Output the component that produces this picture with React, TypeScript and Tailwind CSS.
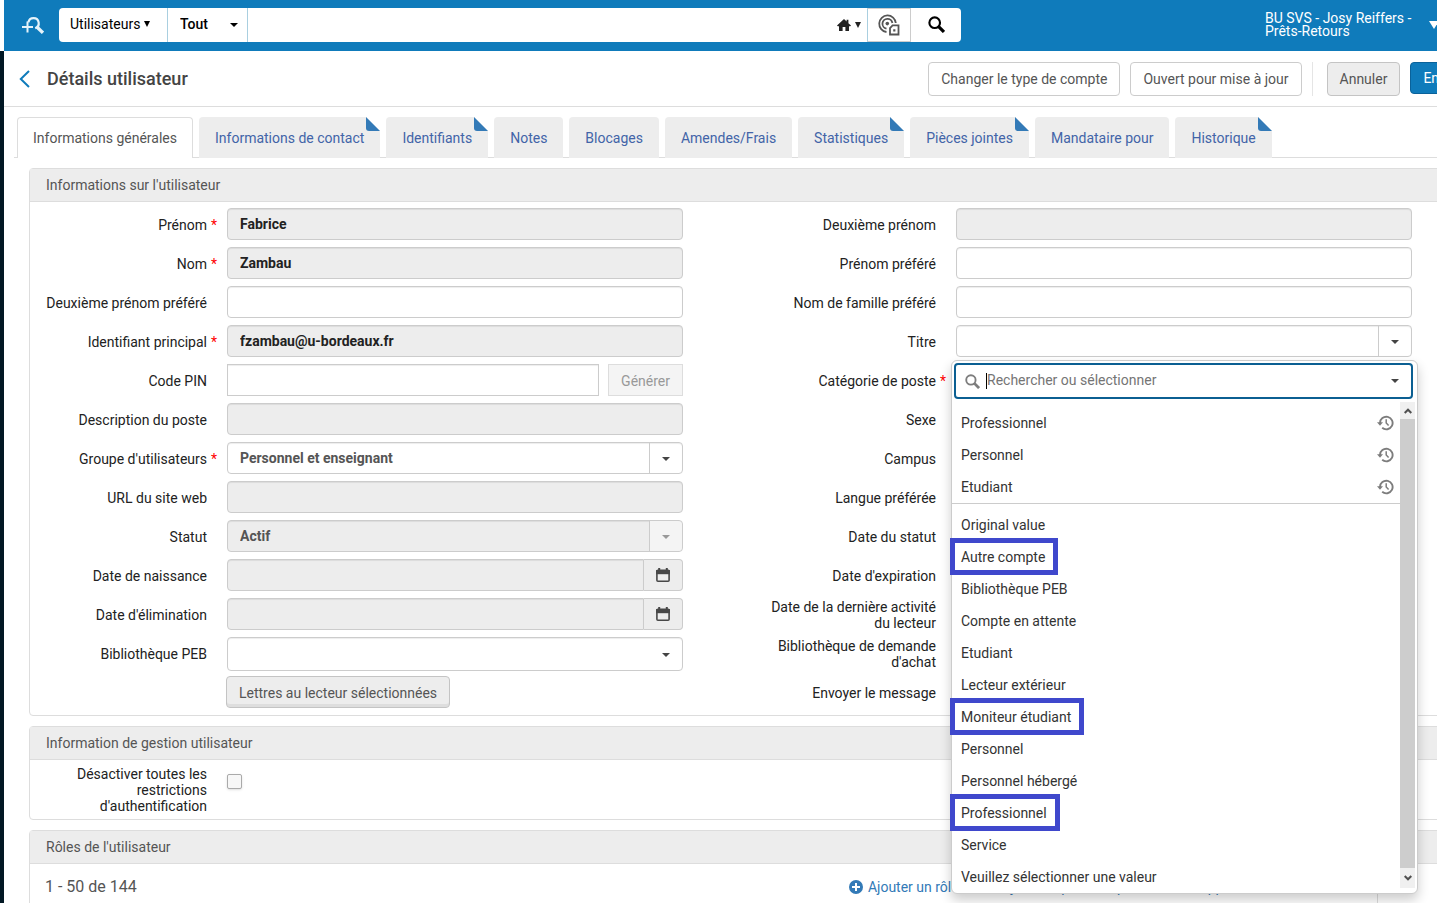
// App.tsx
// User details page: top search bar, tabs, form panels and the open
// "Catégorie de poste" dropdown.

import { useState, type ReactNode } from 'react';
import clsx from 'clsx';

type Field = {
  id: string;
  label: string;
  kind: 'text' | 'select' | 'combo' | 'date' | 'pin' | 'button' | 'category';
  value?: string;
  required?: boolean;
  disabled?: boolean;
};

const TABS = [
  { label: 'Informations générales' },
  { label: 'Informations de contact', flag: true },
  { label: 'Identifiants', flag: true },
  { label: 'Notes' },
  { label: 'Blocages' },
  { label: 'Amendes/Frais' },
  { label: 'Statistiques', flag: true },
  { label: 'Pièces jointes', flag: true },
  { label: 'Mandataire pour' },
  { label: 'Historique', flag: true },
];

const LEFT: Field[] = [
  { id: 'first', label: 'Prénom', kind: 'text', value: 'Fabrice', required: true, disabled: true },
  { id: 'last', label: 'Nom', kind: 'text', value: 'Zambau', required: true, disabled: true },
  { id: 'prefMiddle', label: 'Deuxième prénom préféré', kind: 'text' },
  { id: 'primary', label: 'Identifiant principal', kind: 'text', value: 'fzambau@u-bordeaux.fr', required: true, disabled: true },
  { id: 'pin', label: 'Code PIN', kind: 'pin' },
  { id: 'job', label: 'Description du poste', kind: 'text', disabled: true },
  { id: 'group', label: "Groupe d'utilisateurs", kind: 'select', value: 'Personnel et enseignant', required: true },
  { id: 'url', label: 'URL du site web', kind: 'text', disabled: true },
  { id: 'status', label: 'Statut', kind: 'select', value: 'Actif', disabled: true },
  { id: 'birth', label: 'Date de naissance', kind: 'date', disabled: true },
  { id: 'purge', label: "Date d'élimination", kind: 'date', disabled: true },
  { id: 'library', label: 'Bibliothèque PEB', kind: 'combo' },
  { id: 'letters', label: '', kind: 'button', value: 'Lettres au lecteur sélectionnées' },
];

const RIGHT: Field[] = [
  { id: 'middle', label: 'Deuxième prénom', kind: 'text', disabled: true },
  { id: 'prefFirst', label: 'Prénom préféré', kind: 'text' },
  { id: 'prefLast', label: 'Nom de famille préféré', kind: 'text' },
  { id: 'title', label: 'Titre', kind: 'select' },
  { id: 'category', label: 'Catégorie de poste', kind: 'category', required: true },
  { id: 'gender', label: 'Sexe', kind: 'select' },
  { id: 'campus', label: 'Campus', kind: 'select' },
  { id: 'lang', label: 'Langue préférée', kind: 'select' },
  { id: 'statusDate', label: 'Date du statut', kind: 'date', disabled: true },
  { id: 'expiry', label: "Date d'expiration", kind: 'date' },
  { id: 'activity', label: 'Date de la dernière activité du lecteur', kind: 'date', disabled: true },
  { id: 'acqLibrary', label: "Bibliothèque de demande d'achat", kind: 'combo' },
  { id: 'message', label: 'Envoyer le message', kind: 'text' },
];

const RECENT = ['Professionnel', 'Personnel', 'Etudiant'];

const OPTIONS = [
  { label: 'Original value' },
  { label: 'Autre compte', marked: true },
  { label: 'Bibliothèque PEB' },
  { label: 'Compte en attente' },
  { label: 'Etudiant' },
  { label: 'Lecteur extérieur' },
  { label: 'Moniteur étudiant', marked: true },
  { label: 'Personnel' },
  { label: 'Personnel hébergé' },
  { label: 'Professionnel', marked: true },
  { label: 'Service' },
  { label: 'Veuillez sélectionner une valeur' },
];

function Caret({ className }: { className?: string }) {
  return (
    <svg width="8" height="4" viewBox="0 0 8 4" className={className} aria-hidden="true">
      <path d="M0 0h8L4 4z" fill="currentColor" />
    </svg>
  );
}

function CalendarIcon() {
  return (
    <svg width="16" height="16" viewBox="0 0 16 16" className="text-[#484848]" aria-hidden="true">
      <rect x="1.9" y="3.2" width="12.2" height="11" rx="1" fill="none" stroke="currentColor" strokeWidth="1.6" />
      <path d="M1.1 3h13.8v4.2H1.1z" fill="currentColor" />
      <path d="M3.2 1h2v3h-2zM10.8 1h2v3h-2z" fill="currentColor" />
    </svg>
  );
}

function Magnifier({ size, className }: { size: number; className?: string }) {
  return (
    <svg width={size} height={size} viewBox="0 0 16 16" className={className} aria-hidden="true">
      <circle cx="6.3" cy="6.3" r="5" fill="none" stroke="currentColor" strokeWidth="2" />
      <path d="M10 10l5 5" stroke="currentColor" strokeWidth="3" />
    </svg>
  );
}

function HistoryIcon() {
  return (
    <svg width="17" height="16" viewBox="0 0 17 16" className="text-[#7d7d7d]" aria-hidden="true">
      <path d="M3 8a6.3 6.3 0 1 1 2.2 4.8" fill="none" stroke="currentColor" strokeWidth="1.9" />
      <path d="M0 7.3h6L3 10.8z" fill="currentColor" />
      <path d="M9.2 4.3V8l2.4 2.6" fill="none" stroke="currentColor" strokeWidth="1.5" />
    </svg>
  );
}

function TopBar() {
  return (
    <header className="flex h-[51px] items-center bg-[#0f7bbb] pb-0.5">
      <button type="button" aria-label="Recherche avancée" className="flex w-[55px] justify-center pl-0.5 text-[#e6f3fa]">
        <svg width="22" height="18" viewBox="0 0 22 18" fill="none" stroke="currentColor">
          <path d="M0 11h11M5.5 5.5v11" strokeWidth="2" />
          <path d="M6.4 6.4a5.2 5.2 0 1 1 6.8 5.8" strokeWidth="2.2" />
          <path d="M15.2 11.2l5.8 5.6" strokeWidth="3.4" />
        </svg>
      </button>
      <form className="flex h-[34px] w-[902px] overflow-hidden rounded-sm bg-white text-sm text-black">
        <button type="button" className="flex w-[109px] items-center gap-1 border-r border-[#a9cfe0] pb-0.5 pl-[11px]">
          Utilisateurs
          <svg width="6" height="6" viewBox="0 0 6 6"><path d="M0 0h6L3 6z" fill="currentColor" /></svg>
        </button>
        <div className="relative w-20 border-r border-[#a9cfe0]">
          <select aria-label="Champ de recherche" className="h-full w-full appearance-none pb-0.5 pl-3 font-medium">
            <option>Tout</option>
          </select>
          <Caret className="pointer-events-none absolute top-[15px] right-[9px]" />
        </div>
        <input aria-label="Rechercher" className="min-w-0 flex-1 px-3 outline-none" />
        <button type="button" aria-label="Portée" className="flex w-10 items-center justify-center gap-1 pl-1 text-[#222]">
          <svg width="14" height="12" viewBox="0 0 14 12" fill="currentColor">
            <path d="M7 0l2.6 2.4V.8h1.8v3.4L14 6.6l-.8.6H12V12H8.4V8H5.6v4H2V7.2H.8L0 6.6z" />
          </svg>
          <svg width="6" height="6" viewBox="0 0 6 6"><path d="M0 0h6L3 6z" fill="currentColor" /></svg>
        </button>
        <button type="button" aria-label="RFID" className="flex w-11 items-center justify-center border border-[#ccc] border-l-[#a9cfe0] text-[#555]">
          <svg width="22" height="22" viewBox="0 0 22 22" fill="none" stroke="currentColor" strokeWidth="1.8">
            <path d="M8.5 18A8.3 8.3 0 1 1 17.8 9" />
            <path d="M8.5 14.7A5 5 0 1 1 14.4 9" />
            <circle cx="9.3" cy="9.6" r="1.8" fill="currentColor" stroke="none" />
            <path d="M12 20.5V14l2.6-2.6h5.9v9.1z" />
            <path d="M15.2 15.2h2.2v2.2h-2.2z" fill="currentColor" stroke="none" />
          </svg>
        </button>
        <button type="submit" aria-label="Lancer la recherche" className="flex w-[50px] items-center justify-center text-black">
          <Magnifier size={17} />
        </button>
      </form>
      <div className="ml-auto flex items-center pr-[86px] text-sm leading-[13px] text-white">
        <span className="w-[164px]">BU SVS - Josy Reiffers - Prêts-Retours</span>
        <svg width="10" height="8" viewBox="0 0 10 8" aria-hidden="true"><path d="M0 0h10L5 8z" fill="currentColor" /></svg>
      </div>
    </header>
  );
}

function TitleBar() {
  return (
    <div className="flex h-14 items-center border-b border-[#ddd] pr-[21px] pl-[15px]">
      <a href="#retour" aria-label="Retour" className="text-[#0f7bbb]">
        <svg width="11" height="18" viewBox="0 0 11 18" fill="none" stroke="currentColor" strokeWidth="2">
          <path d="M10 1L1.8 9l8.2 8" />
        </svg>
      </a>
      <h1 className="ml-[17px] text-lg font-medium text-[#444]">Détails utilisateur</h1>
      <div className="ml-auto flex items-center text-sm text-[#555]">
        <button type="button" className="h-[34px] rounded-sm border border-[#ccc] px-3">Changer le type de compte</button>
        <button type="button" className="ml-2.5 h-[34px] rounded-sm border border-[#ccc] px-3">Ouvert pour mise à jour</button>
        <span className="ml-2.5 h-[34px] border-l border-[#e5e5e5]" />
        <button type="button" className="ml-3.5 h-[34px] rounded-sm border border-[#c4c4c4] bg-[#ededed] px-3">Annuler</button>
        <button type="button" className="mb-0.5 ml-2.5 h-8 rounded-sm border border-[#0a629a] bg-[#0f7bbb] px-3 text-white">Enregistrer</button>
      </div>
    </div>
  );
}

function Tabs() {
  const [active, setActive] = useState(0);
  return (
    <nav role="tablist" className="mt-2.5 ml-2.5 flex h-[41px] gap-1.5 border-b border-[#ddd] pl-[3px] text-sm">
      {TABS.map((tab, i) => (
        <button
          key={tab.label}
          type="button"
          role="tab"
          aria-selected={i === active}
          onClick={() => setActive(i)}
          className={clsx(
            'relative -mb-px rounded-t-sm',
            i === active
              ? 'border border-b-0 border-[#ddd] bg-white px-[15px] text-[#555]'
              : 'bg-[#ededed] px-4 text-[#4264a8]',
          )}
        >
          {tab.label}
          {tab.flag && (
            <svg width="14" height="14" viewBox="0 0 14 14" className="absolute top-0 right-0" aria-hidden="true">
              <path d="M0 0h14v14z" fill="#fff" />
              <path d="M0 0l14 14H3a3 3 0 0 1-3-3z" fill="#337ab7" />
            </svg>
          )}
        </button>
      ))}
    </nav>
  );
}

function Panel({ title, children }: { title: string; children: ReactNode }) {
  return (
    <section className="rounded-sm border border-[#ddd]">
      <h2 className="h-[33px] border-b border-[#ddd] bg-[#ededed] pl-4 text-sm leading-8 text-[#555]">{title}</h2>
      {children}
    </section>
  );
}

function CategoryDropdown({ id }: { id: string }) {
  return (
    <div className="absolute -top-1 -right-1.5 -left-[5px] z-10 rounded-md border border-[#ccc] bg-white p-0.5 pb-0 shadow-[0_6px_12px_rgba(0,0,0,0.2)]">
      <div className="mr-0.5 flex h-9 items-center rounded-sm border-2 border-[#0b5f92] pr-3 pl-[9px]">
        <Magnifier size={15} className="text-[#7d7d7d]" />
        <span className="ml-1.5 h-4 w-px bg-black" />
        <input id={id} placeholder="Rechercher ou sélectionner" className="min-w-0 flex-1 pb-0.5 text-sm outline-none placeholder:text-[#757575]" />
        <Caret className="text-[#444]" />
      </div>
      <div className="mt-[3px] -ml-0.5 flex text-sm text-[#333]">
        <div className="min-w-0 flex-1 pt-[5px]">
          <ul className="border-b border-[#ccc]">
            {RECENT.map(name => (
              <li key={name} className="flex h-8 items-center justify-between pr-1.5 pl-[9px]">
                {name}
                <HistoryIcon />
              </li>
            ))}
          </ul>
          <ul className="pt-[5px]">
            {OPTIONS.map(opt => (
              <li key={opt.label} className="flex h-8 pl-[9px] leading-8">
                <span className="relative">
                  {opt.label}
                  {opt.marked && <span className="absolute -top-[3px] -right-[13px] -bottom-0.5 -left-[11px] border-5 border-[#3f48cc]" />}
                </span>
              </li>
            ))}
          </ul>
        </div>
        <div className="mb-[5px] flex w-[15px] flex-col bg-[#cdcdcd] text-[#505050]">
          <span className="flex h-[17px] items-center justify-center bg-[#f0f0f0]">
            <svg width="8" height="6" viewBox="0 0 8 6" fill="none" stroke="currentColor" strokeWidth="2"><path d="M.7 5L4 1.7 7.3 5" /></svg>
          </span>
          <span className="mt-auto flex h-5 items-center justify-center bg-[#f0f0f0]">
            <svg width="8" height="6" viewBox="0 0 8 6" fill="none" stroke="currentColor" strokeWidth="2"><path d="M.7 1L4 4.3 7.3 1" /></svg>
          </span>
        </div>
      </div>
    </div>
  );
}

const BOX = 'w-full rounded-sm border border-[#ccc] px-3 text-sm font-bold outline-none';

function Control({ field }: { field: Field }) {
  const { id, kind, value, disabled } = field;
  const fill = disabled ? 'bg-[#ededed]' : 'bg-white';
  const inset = 'shadow-[inset_0_1px_1px_rgba(0,0,0,0.075)]';

  if (kind === 'category') {
    return <CategoryDropdown id={id} />;
  }
  if (kind === 'button') {
    return (
      <button type="button" className="-ml-px h-8 rounded-sm border border-[#c4c4c4] bg-[#ededed] px-3 pt-0.5 text-sm text-[#555] shadow-[inset_0_-3px_0_#dedede]">
        {value}
      </button>
    );
  }
  if (kind === 'pin') {
    return (
      <div className="flex gap-[9px]">
        <input id={id} className={clsx('h-8 min-w-0 flex-1 border border-[#ccc] px-3 text-sm font-bold', inset)} />
        <button type="button" disabled className="h-8 border border-[#ddd] bg-[#f4f4f4] px-3 pt-0.5 text-sm text-[#999]">Générer</button>
      </div>
    );
  }
  if (kind === 'select' || kind === 'combo') {
    return (
      <div className={clsx('relative', kind === 'combo' ? 'h-[34px]' : 'h-8')}>
        <select id={id} disabled={disabled} className={clsx(BOX, fill, inset, 'h-full appearance-none text-[#555] opacity-100')}>
          <option>{value ?? ''}</option>
        </select>
        <span
          className={clsx(
            'pointer-events-none absolute inset-y-px right-px flex w-[33px] items-center justify-center rounded-r-sm pt-0.5',
            kind === 'select' && 'border-l border-[#ccc]',
            disabled ? 'bg-[#f4f4f4] text-[#999]' : 'text-[#444]',
          )}
        >
          <Caret />
        </span>
      </div>
    );
  }
  if (kind === 'date') {
    return (
      <div className="flex">
        <input id={id} readOnly={disabled} className={clsx('h-8 min-w-0 flex-1 rounded-l-sm border border-[#ccc] px-3 text-sm', fill, inset)} />
        <button type="button" aria-label="Ouvrir le calendrier" className="flex w-[39px] items-center justify-center rounded-r-sm border border-l-0 border-[#ccc] bg-[#ededed]">
          <CalendarIcon />
        </button>
      </div>
    );
  }
  return <input id={id} defaultValue={value} readOnly={disabled} className={clsx(BOX, fill, inset, 'h-8 text-[#222]')} />;
}

function Column({ fields }: { fields: Field[] }) {
  return (
    <div className="pr-[76px]">
      {fields.map(field => (
        <div key={field.id} className="flex h-[39px]">
          <div className="flex h-[34px] w-[197px] shrink-0 items-center pl-3 text-sm leading-4 text-[#222]">
            <label htmlFor={field.id} className="flex-1 text-right">{field.label}</label>
            <span className="w-5 pl-1 text-[#f00]">{field.required && '*'}</span>
          </div>
          <div className="relative min-w-0 flex-1">
            <Control field={field} />
          </div>
        </div>
      ))}
    </div>
  );
}

function AddLink({ children }: { children: string }) {
  return (
    <a href="#roles" className="flex items-center gap-[5px]">
      <svg width="14" height="14" viewBox="0 0 14 14" aria-hidden="true">
        <circle cx="7" cy="7" r="7" fill="#337ab7" />
        <path d="M7 3v8M3 7h8" stroke="#fff" strokeWidth="2" />
      </svg>
      {children}
    </a>
  );
}

export default function App() {
  return (
    <div className="flex h-screen overflow-hidden bg-white font-[Roboto,sans-serif]">
      <aside className="mt-[51px] w-1 shrink-0 bg-[#021824]" />
      {/* the page is wider than the window and runs off its right edge */}
      <div className="-mr-[88px] min-w-0 flex-1">
        <TopBar />
        <TitleBar />
        <Tabs />
        <main className="mt-2.5 mr-9 ml-[25px] flex flex-col gap-2.5">
          <Panel title="Informations sur l'utilisateur">
            <div className="grid grid-cols-2 pt-1.5">
              <Column fields={LEFT} />
              <Column fields={RIGHT} />
            </div>
          </Panel>
          <Panel title="Information de gestion utilisateur">
            <div className="flex pt-1.5 pb-[5px] text-sm leading-4 text-[#222]">
              <label htmlFor="restrictions" className="w-[177px] pl-10 text-right">
                Désactiver toutes les restrictions d'authentification
              </label>
              <input
                id="restrictions"
                type="checkbox"
                className="mt-2 ml-5 size-[15px] appearance-none rounded-xs border border-[#aaa] bg-[#f7f7f7] shadow-sm"
              />
            </div>
          </Panel>
          <Panel title="Rôles de l'utilisateur">
            <div className="flex h-[60px] items-start pt-2 pr-[110px] pl-[15px] text-sm text-[#337ab7]">
              <span className="text-base leading-[30px] text-[#555]">1 - 50 de 144</span>
              <div className="ml-auto flex h-full items-start gap-6 border-r border-[#ddd] pr-[121px] leading-[30px]">
                <AddLink>Ajouter un rôle</AddLink>
                <AddLink>Ajouter à partir du profil</AddLink>
                <AddLink>Supprimer</AddLink>
              </div>
            </div>
          </Panel>
        </main>
      </div>
    </div>
  );
}
